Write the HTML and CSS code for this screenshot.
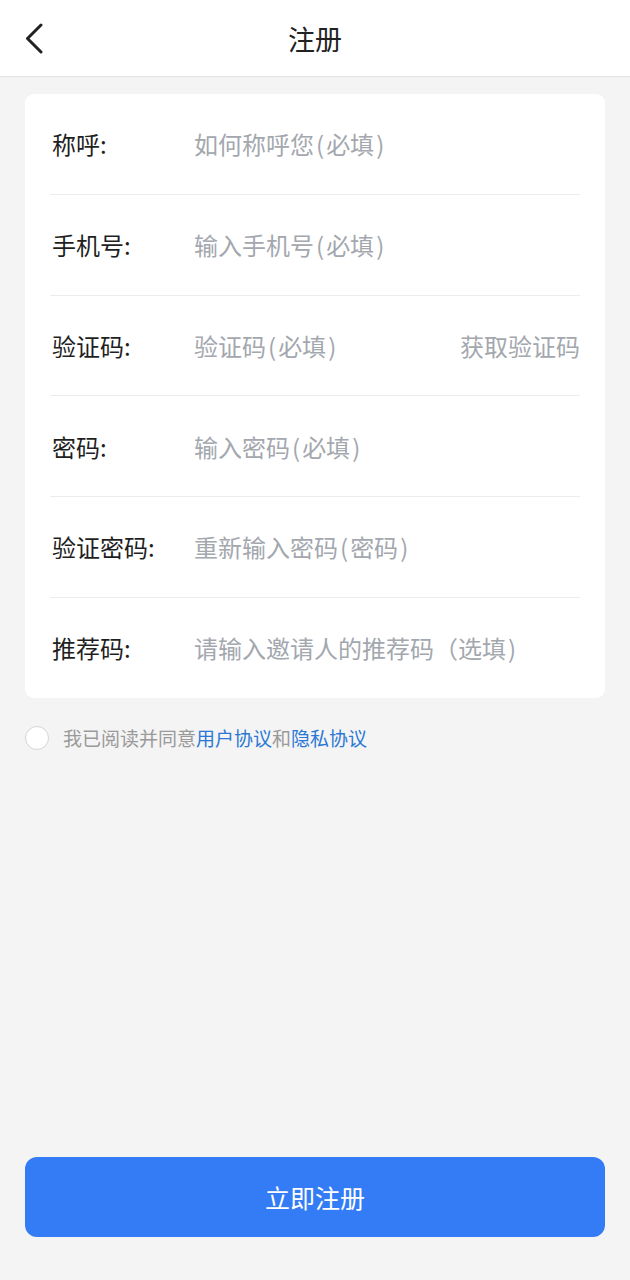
FILE: index.html
```html
<!DOCTYPE html>
<html lang="zh-CN">
<head>
<meta charset="utf-8">
<title>注册</title>
<link rel="stylesheet" href="styles.css">
</head>
<body>
<div class="page">
  <header class="topbar">
    <span class="back">
      <svg width="22" height="32" viewBox="0 0 22 32"><polyline points="17,2 3.5,15.5 17,29" fill="none" stroke="#222" stroke-width="3" stroke-linecap="round" stroke-linejoin="round"/></svg>
    </span>
    <h1 class="title">注册</h1>
  </header>
  <main class="main">
    <div class="card">
      <div class="row"><span class="label">称呼:</span><span class="ph">如何称呼您<span class="paren">(</span>必填<span class="paren">)</span></span></div>
      <div class="row"><span class="label">手机号:</span><span class="ph">输入手机号<span class="paren">(</span>必填<span class="paren">)</span></span></div>
      <div class="row"><span class="label">验证码:</span><span class="ph">验证码<span class="paren">(</span>必填<span class="paren">)</span></span><span class="getcode">获取验证码</span></div>
      <div class="row"><span class="label">密码:</span><span class="ph">输入密码<span class="paren">(</span>必填<span class="paren">)</span></span></div>
      <div class="row"><span class="label">验证密码:</span><span class="ph">重新输入密码<span class="paren">(</span>密码<span class="paren">)</span></span></div>
      <div class="row"><span class="label">推荐码:</span><span class="ph">请输入邀请人的推荐码（选填<span class="paren">)</span></span></div>
    </div>
    <div class="agree">
      <span class="radio"></span>
      <span class="agree-text">我已阅读并同意<a class="link">用户协议</a>和<a class="link">隐私协议</a></span>
    </div>
    <div class="spacer"></div>
    <button class="submit">立即注册</button>
  </main>
</div>
</body>
</html>
```

FILE: styles.css
```css
html, body {
  margin: 0;
  padding: 0;
  background: #f4f4f4;
  font-family: "Noto Sans CJK SC", "Noto Sans", sans-serif;
}
.page {
  min-height: 1280px;
  display: flex;
  flex-direction: column;
}
.topbar {
  height: 77px;
  background: #fff;
  border-bottom: 1px solid #e3e3e3;
  display: flex;
  align-items: center;
  justify-content: center;
  position: relative;
  box-sizing: border-box;
}
.back {
  position: absolute;
  left: 24px;
  top: 23px;
  width: 22px;
  height: 32px;
}
.title {
  margin: 0;
  font-size: 27px;
  font-weight: 400;
  color: #222;
}
.main {
  flex: 1;
  display: flex;
  flex-direction: column;
  padding: 17px 25px 43px;
}
.card {
  background: #fff;
  border-radius: 9px;
  padding: 0 25px;
}
.row {
  height: 99.75px;
  display: flex;
  align-items: center;
  border-bottom: 1px solid #ececec;
  font-size: 24px;
}
.row:last-child {
  border-bottom: none;
}
.label {
  width: 144px;
  color: #1f1f1f;
  padding-left: 2px;
  box-sizing: border-box;
}
.ph {
  color: #a3a7ae;
  flex: 1;
}
.paren {
  margin: 0 2px;
}
.getcode {
  color: #a3a7ae;
}
.agree {
  margin-top: 28px;
  display: flex;
  align-items: center;
  height: 24px;
}
.radio {
  width: 22px;
  height: 22px;
  border: 1.5px solid #d4d4d4;
  border-radius: 50%;
  background: #fff;
  margin-right: 14px;
}
.agree-text {
  font-size: 19px;
  color: #9a9a9a;
}
.link {
  color: #2a78d4;
}
.spacer {
  flex: 1;
}
.submit {
  height: 80px;
  border: none;
  border-radius: 12px;
  background: #337cf6;
  color: #fff;
  font-size: 25px;
  font-family: "Noto Sans CJK SC", "Noto Sans", sans-serif;
}
```
